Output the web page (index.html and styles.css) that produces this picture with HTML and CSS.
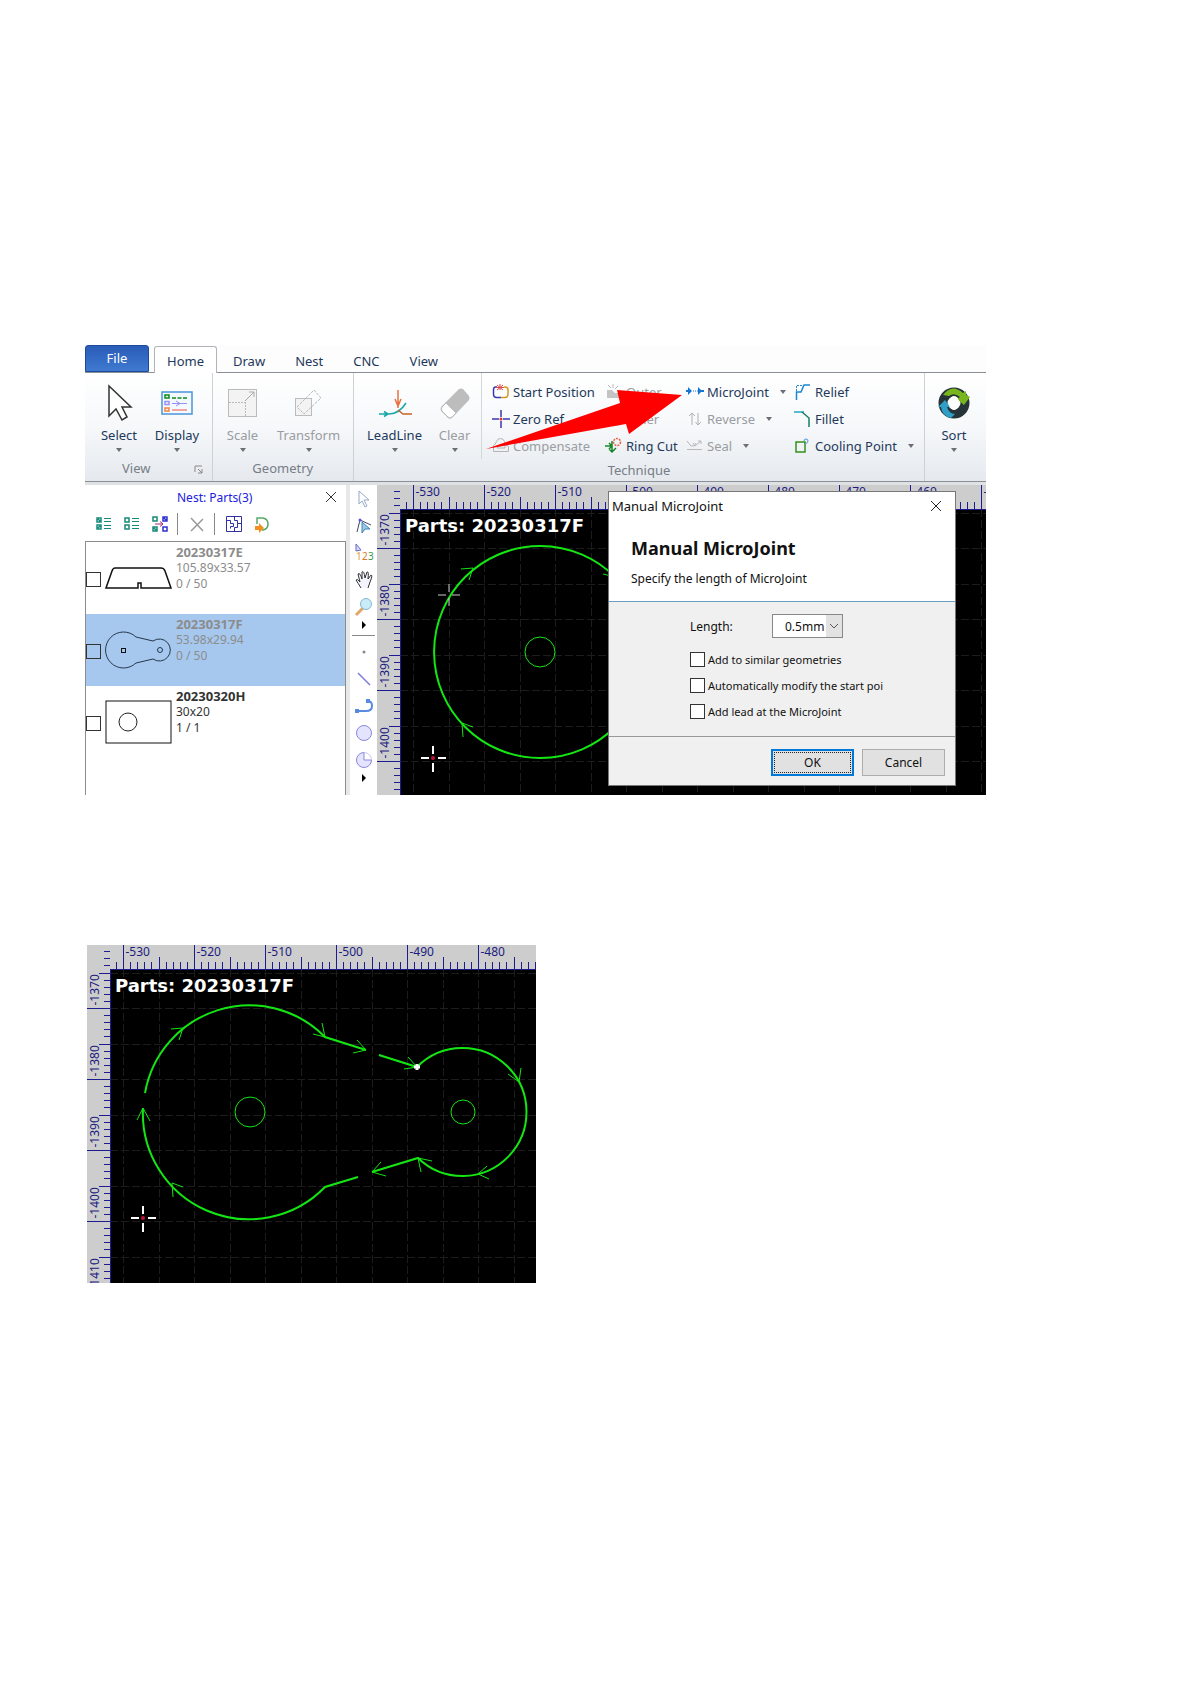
FILE: index.html
```html
<!DOCTYPE html>
<html lang="en">
<head>
    <meta charset="UTF-8">
    <meta name="viewport" content="width=device-width, initial-scale=1.0">
    <title>Manual MicroJoint</title>
    <link rel="stylesheet" href="styles.css">
</head>
<body>
    <div class="app">
        <nav class="tabs">
            <button class="tab file">File</button>
            <button class="tab active">Home</button>
            <button class="tab">Draw</button>
            <button class="tab">Nest</button>
            <button class="tab">CNC</button>
            <button class="tab">View</button>
        </nav>
        <div class="ribbon">
            <section class="group view">
                <div class="tools">
                    <button class="big">
                        <svg width="36" height="38"><path d="M8 2v30l7-7 6 11 5-3-5-10h9z" fill="#fff" stroke="#333" stroke-width="1.5"/></svg>
                        <span>Select</span><i class="caret"></i>
                    </button>
                    <button class="big">
                        <svg width="36" height="38"><rect x="3" y="8" width="30" height="22" fill="#f4f9ff" stroke="#4a94d8" stroke-width="1.5"/><path d="M6 11h4v3H6z" fill="none" stroke="#0a8a1a" stroke-width="1.5"/><path d="M6 17.500h4v3H6z" fill="none" stroke="#9a90f0" stroke-width="1.500"/><path d="M6 24h4v3H6z" fill="none" stroke="#f58040" stroke-width="1.500"/><path d="M13 14h15" stroke="#0a8a1a" stroke-width="1.500" stroke-dasharray="4 1.500"/><path d="M13 19.500h15M17 17l4 2.500-4 2.500" fill="none" stroke="#9a90f0"/><path d="M13 26h15" stroke="#f05040"/></svg>
                        <span>Display</span><i class="caret"></i>
                    </button>
                </div>
                <h3>View</h3>
                <svg class="launcher" width="9" height="9"><path d="M1 7V1h7M4 4l4 4M8 4v4H4" fill="none" stroke="#888"/></svg>
            </section>
            <section class="group geometry">
                <div class="tools">
                    <button class="big off">
                        <svg width="36" height="38"><rect x="3.500" y="5.500" width="28" height="27" fill="#f3f3f3" stroke="#bbb"/><path d="M4 18.500h16M20.500 18v14" fill="none" stroke="#bbb" stroke-dasharray="2 1"/><path d="M20 17l9-9M24 8h5v5" fill="none" stroke="#aaa"/></svg>
                        <span>Scale</span><i class="caret"></i>
                    </button>
                    <button class="big off">
                        <svg width="36" height="38"><rect x="4.500" y="14.500" width="16" height="17" fill="#f3f3f3" stroke="#bbb"/><path d="M6 23L23 6l7 8-17 16z" fill="none" stroke="#bbb" stroke-dasharray="3 1"/></svg>
                        <span>Transform</span><i class="caret"></i>
                    </button>
                </div>
                <h3>Geometry</h3>
            </section>
            <section class="group technique">
                <div class="tools">
                    <button class="big">
                        <svg width="36" height="38"><path d="M21 6v18M18 15l3 7 3-7" fill="none" stroke="#e87040" stroke-width="1.500"/><path d="M2 30h10c7 0 12-3 17-11M7 27.500l4 2.500-4 2.500" fill="none" stroke="#18a8a8" stroke-width="1.500"/><path d="M21 26l5 4h9" fill="none" stroke="#c86428" stroke-width="1.500"/></svg>
                        <span>LeadLine</span><i class="caret"></i>
                    </button>
                    <button class="big off">
                        <svg width="36" height="38"><path d="M4 23L22 5q2-1 4 0l6 7q1 2 0 4L15 34q-2 1-4 0l-7-7q-1-2 0-4z" fill="#bdbdbd"/><path d="M5 23l4-4 10 10-4 4q-2 2-4 0l-6-6q-1-2 0-4z" fill="#fff" stroke="#bbb"/></svg>
                        <span>Clear</span><i class="caret"></i>
                    </button>
                    <div class="cols">
                        <button class="small">
                            <svg width="18" height="18"><path d="M5 4H3.500Q1.500 4 1.500 7v4q0 3.500 3 3.500H9" fill="none" stroke="#3838b8" stroke-width="1.500"/><path d="M9 14.500h4q3 0 3-3.500V7q0-3-3-3h-1" fill="none" stroke="#d89820" stroke-width="1.500"/><path d="M5 2l6 5M11 2L5 7M8 1v6M4 4.500h8" stroke="#e04848"/></svg>
                            Start Position
                        </button>
                        <button class="small off">
                            <svg width="18" height="18"><path d="M2 7h5l3 3h5v5H2z" fill="#c4c4c4"/><path d="M3 2l3 3M8 1v4M13 3l-3 3" stroke="#bbb"/></svg>
                            Outer
                        </button>
                        <button class="small">
                            <svg width="18" height="18"><path d="M0 8h4M14 8h4" stroke="#1477d4" stroke-width="2"/><path d="M2 4l4 4-4 4zM12 4l4 4-4 4z" fill="#1477d4"/><path d="M7 8h5" stroke="#1477d4" stroke-dasharray="1 1"/></svg>
                            MicroJoint <i class="caret"></i>
                        </button>
                        <button class="small">
                            <svg width="18" height="18"><path d="M2.500 17V9H7l3-7h6" fill="none" stroke="#1c86d0" stroke-width="1.500"/><path d="M2.500 8V2.500H9" fill="none" stroke="#1c86d0" stroke-dasharray="2 1"/></svg>
                            Relief
                        </button>
                        <button class="small">
                            <svg width="18" height="18"><path d="M0 9h7M11 9h7M9 0v7M9 11v7" stroke="#3838b0" stroke-width="1.500"/><circle cx="9" cy="9" r="1.500" fill="#d83030"/></svg>
                            Zero Ref
                        </button>
                        <button class="small off">
                            <svg width="18" height="18"><path d="M2 5h12v10H2z" fill="none" stroke="#bbb"/></svg>
                            Inner
                        </button>
                        <button class="small off">
                            <svg width="18" height="18"><path d="M6 15V3M3 6l3-3 3 3M12 3v12M9.500 12l2.500 3 3-3" fill="none" stroke="#b0b0b0"/></svg>
                            Reverse <i class="caret"></i>
                        </button>
                        <button class="small">
                            <svg width="18" height="18"><path d="M0 2h10" stroke="#1ca8c0" stroke-width="1.500"/><path d="M8 2l7 6v9" fill="none" stroke="#168060" stroke-width="1.500"/></svg>
                            Fillet
                        </button>
                        <button class="small off">
                            <svg width="18" height="18"><path d="M1.500 8.500q2-1 3-4t4-3 4 3q0 4 4 5v5h-15z" fill="none" stroke="#b4b4b4"/><path d="M5 11h8V8H7z" fill="none" stroke="#b4b4b4"/></svg>
                            Compensate
                        </button>
                        <button class="small">
                            <svg width="18" height="18"><path d="M0 9h7M4 6l3 3-3 3M7 4v10M4 12l3 3 4-4" fill="none" stroke="#16862a" stroke-width="1.500"/><circle cx="12" cy="5" r="3.500" fill="none" stroke="#e06040" stroke-width="1.500" stroke-dasharray="2 1"/></svg>
                            Ring Cut
                        </button>
                        <button class="small off">
                            <svg width="18" height="18"><path d="M1 4l4 5h3l2-3M7 6l2 3 6-5M1 12.500h15M12 4h3v3" fill="none" stroke="#b8b8b8"/></svg>
                            Seal <i class="caret"></i>
                        </button>
                        <button class="small">
                            <svg width="18" height="18"><path d="M2 5h9v10H2z" fill="none" stroke="#36901c" stroke-width="1.500"/><path d="M10 4q0-2 2-2t2 2-3 3" fill="none" stroke="#4a94e0"/></svg>
                            Cooling Point <i class="caret"></i>
                        </button>
                    </div>
                </div>
                <h3>Technique</h3>
            </section>
            <section class="group sort">
                <div class="tools">
                    <button class="big">
                        <svg width="36" height="38"><circle cx="18" cy="19" r="11" fill="none" stroke="#26343a" stroke-width="9"/><path d="M7 11Q16-1 27 9l3-2v4l4 2-6 8-7-6 3-2q-6-5-11-1z" fill="#79b51c"/><path d="M2 23l7-7 5 7h-3q2 7 8 7l-4 4Q6 32 5 23z" fill="#2f9fc8"/><ellipse cx="18" cy="19" rx="5" ry="7" fill="#fff"/></svg>
                        <span>Sort</span><i class="caret"></i>
                    </button>
                </div>
            </section>
            <svg class="pointer" width="200" height="62"><path d="M3 60L137 14 134 1 199 6 146 45 143 35z" fill="#f00"/></svg>
        </div>
        <div class="workspace">
            <aside class="parts">
                <header>
                    <h2>Nest: Parts(3)</h2>
                    <button class="close" aria-label="Close"><svg width="12" height="12"><path d="M1 1l10 10M11 1L1 11" stroke="#333"/></svg></button>
                </header>
                <div class="part-tools">
                    <button aria-label="Select all"><svg width="18" height="18"><path d="M2 3h4v4H2zM2 10h4v4H2zM3 4l2 2M5 11l-2 2" fill="none" stroke="#168a7a" stroke-width="1.500"/><path d="M9 3.500h7M9 6.500h7M9 10.500h7M9 13.500h7" stroke="#168a7a"/></svg></button>
                    <button aria-label="Select none"><svg width="18" height="18"><path d="M2 3h4v4H2zM2 10h4v4H2z" fill="none" stroke="#168a7a" stroke-width="1.500"/><path d="M9 3.500h7M9 6.500h7M9 10.500h7M9 13.500h7" stroke="#168a7a"/></svg></button>
                    <button aria-label="Invert"><svg width="18" height="18"><path d="M2 2h4v4H2zM2 12h4v4H2zM3 13l2 2" fill="none" stroke="#168a7a" stroke-width="1.500"/><path d="M12 2h4v4h-4zM12 12h4v4h-4zM13 3l2 2" fill="none" stroke="#3030d0" stroke-width="1.500"/><path d="M4 9h8M9 6.500L12 9l-3 2.500" fill="none" stroke="#a02878"/></svg></button>
                    <hr>
                    <button class="gap" aria-label="Delete"><svg width="18" height="18"><path d="M3 3l12 13M15 4L3 16" stroke="#999" stroke-width="1.500"/></svg></button>
                    <hr>
                    <button class="gap" aria-label="Nest"><svg width="18" height="18"><path d="M1.500 1.500h15v15h-15zM1 5.500h4.500v3h3v3h-3v2M9.500 1v4.500h3v3h4M12.500 8.500v4h-3v4" fill="none" stroke="#3030a0"/></svg></button>
                    <button aria-label="Import"><svg width="18" height="18"><path d="M4 9V3h6q5 1 5 6t-5 6H9" fill="none" stroke="#58a868" stroke-width="1.500"/><path d="M2 11h4V8l5 5-5 5v-3H2z" fill="#f09020"/></svg></button>
                </div>
                <ul class="list">
                    <li>
                        <input type="checkbox" id="p1">
                        <svg width="68" height="44"><path d="M7 11q1-3 3-3h46q3 0 4 3l6 17H36v-5h-3v5H1z" fill="none" stroke="#111" stroke-width="1.500"/></svg>
                        <label for="p1"><b>20230317E</b><span>105.89x33.57</span><span>0 / 50</span></label>
                    </li>
                    <li class="selected">
                        <input type="checkbox" id="p2">
                        <svg width="68" height="44"><path d="M31 9A18 18 0 1 0 31 35L48 31A11 11 0 1 0 48 13z" fill="none" stroke="#26384c"/><rect x="16.500" y="20.500" width="4" height="4" fill="none" stroke="#111"/><circle cx="55" cy="22" r="2.500" fill="none" stroke="#26384c"/></svg>
                        <label for="p2"><b>20230317F</b><span>53.98x29.94</span><span>0 / 50</span></label>
                    </li>
                    <li class="ready">
                        <input type="checkbox" id="p3">
                        <svg width="68" height="44"><rect x="1" y="1" width="65" height="42" fill="none" stroke="#111"/><circle cx="23" cy="22" r="9" fill="none" stroke="#222"/></svg>
                        <label for="p3"><b>20230320H</b><span>30x20</span><span>1 / 1</span></label>
                    </li>
                </ul>
            </aside>
            <div class="toolbar">
                <button aria-label="Select"><svg width="20" height="20"><path d="M5 2v13l3-3 3 6 2-1-3-6h5z" fill="#fff" stroke="#98a8c8"/></svg></button>
                <button aria-label="Node edit"><svg width="20" height="20"><path d="M3 16L6 4l11 5" fill="none" stroke="#446"/><path d="M8 6v11l3-4h5z" fill="#9cc8e8" stroke="#3a84b8"/><circle cx="6" cy="4" r="1.500" fill="#55d"/></svg></button>
                <button aria-label="Order"><svg width="20" height="20"><path d="M2 1v7l5-1z" fill="#d8d8ff" stroke="#6868c8"/><text x="2" y="17" class="num" fill="#e0a030">1</text><text x="8" y="17" class="num" fill="#d87828">2</text><text x="14" y="17" class="num" fill="#3a9a48">3</text></svg></button>
                <button aria-label="Pan"><svg width="20" height="20"><path d="M7 18q-3-5-5-8 1-2 4 2L4 4q2-2 4 5L8 2q2-2 3 6l2-6q2-1 1 7l3-4q2 0-1 7l-2 6" fill="#f4f4ff" stroke="#333"/></svg></button>
                <button aria-label="Zoom"><svg width="20" height="20"><path d="M2 18l7-7" stroke="#e0a868" stroke-width="3"/><circle cx="12" cy="7" r="5.500" fill="#c8ecf8" stroke="#88b8cc"/></svg></button>
                <i class="more"></i>
                <hr>
                <button aria-label="Point"><svg width="20" height="20"><circle cx="10" cy="10" r="1.500" fill="#888"/></svg></button>
                <button aria-label="Line"><svg width="20" height="20"><path d="M4 4l12 12" stroke="#7c7cd8" stroke-width="1.500"/></svg></button>
                <button aria-label="Arc"><svg width="20" height="20"><path d="M3 15h9q6 0 6-5t-4-5" fill="none" stroke="#5a8ae0" stroke-width="2"/><path d="M1 13h4v4H1zM12 3h4v4h-4z" fill="#5a8ae0"/></svg></button>
                <button aria-label="Circle"><svg width="20" height="20"><circle cx="10" cy="10" r="7.500" fill="#e4e4ff" stroke="#8888dc"/></svg></button>
                <button aria-label="Pie"><svg width="20" height="20"><path d="M10 10h7.500A7.500 7.500 0 1 1 10 2.500z" fill="#e4e4ff" stroke="#8888dc"/><path d="M10 2.500A7.500 7.500 0 0 1 17.500 10" fill="none" stroke="#c8c8f0"/></svg></button>
                <i class="more"></i>
            </div>
            <div class="stage">
                <svg class="canvas">
                    <g class="grid"></g>
                    <text class="caption" x="28" y="47">Parts: 20230317F</text>
                    <g class="cut">
                        <path d="M238 92A106 106 0 1 0 238 242"/>
                        <circle class="thin" cx="163" cy="167" r="15"/>
                        <path class="thin" d="M84 84l12-1-4 12M226 89l12 3-3-14M96 242l-11-4 1 14"/>
                    </g>
                    <path class="start" d="M61 110h8M75 110h8M72 99v8M72 113v8"/>
                    <path class="cursor" d="M44 273h8M61 273h8M56 261v8M56 278v9"/>
                    <circle cx="56" cy="273" r="2" fill="#c0103c"/>
                </svg>
                <form class="dialog">
                    <header>
                        <span>Manual MicroJoint</span>
                        <button type="button" class="close" aria-label="Close"><svg width="12" height="12"><path d="M1 1l10 10M11 1L1 11" stroke="#222"/></svg></button>
                    </header>
                    <div class="intro">
                        <h1>Manual MicroJoint</h1>
                        <p>Specify the length of MicroJoint</p>
                    </div>
                    <div class="fields">
                        <div class="field">
                            <label for="length">Length:</label>
                            <div class="combo">
                                <select id="length"><option>0.5mm</option></select>
                                <svg width="16" height="22"><path d="M4 9l4 4 4-4" fill="none" stroke="#555"/></svg>
                            </div>
                        </div>
                        <div class="check"><input type="checkbox" id="similar"><label for="similar">Add to similar geometries</label></div>
                        <div class="check"><input type="checkbox" id="modify"><label for="modify">Automatically modify the start poi</label></div>
                        <div class="check"><input type="checkbox" id="lead"><label for="lead">Add lead at the MicroJoint</label></div>
                    </div>
                    <footer>
                        <button type="button" class="ok"><span>OK</span></button>
                        <button type="button">Cancel</button>
                    </footer>
                </form>
            </div>
        </div>
    </div>

    <div class="result">
        <svg class="canvas">
            <g class="grid"></g>
            <text class="caption" x="28" y="47">Parts: 20230317F</text>
            <g class="cut">
                <path d="M58 148A106 106 0 0 1 238 92L279 105M292 110L330 122A64 64 0 1 1 331 213L285 227M271 232L238 242A106 106 0 0 1 56 163"/>
                <circle class="thin" cx="163" cy="167" r="15"/>
                <circle class="thin" cx="376" cy="167" r="12"/>
                <path class="thin" d="M84 84l12-1-4 12M226 89l12 3-3-14M266 108l13-3-9-10M317 124l13-2-9-10M421 129l11 8 2-14M400 221l-9 8 11 5M345 216l-14-3 3 14M294 217l-9 10 14 4M96 242l-11-4 1 14M50 175l6-12 7 13"/>
            </g>
            <path d="M327 122h6M330 119v6" stroke="#fff" stroke-width="3"/>
            <path class="cursor" d="M44 273h8M61 273h8M56 261v8M56 278v9"/>
            <circle cx="56" cy="273" r="2" fill="#c0103c"/>
        </svg>
    </div>
    <script src="ruler.js"></script>
</body>
</html>
```

FILE: styles.css
```css
* {
    box-sizing: border-box;
}
body {
    margin: 0;
    padding: 345px 204px 100px 85px;
    background: #fff;
    font-family: "Noto Sans", "Open Sans", sans-serif;
    font-size: 13px;
    color: #1e395b;
}
button, select {
    font: inherit;
    color: inherit;
}
button {
    background: none;
    border: none;
    padding: 0;
    white-space: nowrap;
}
h1, h2, h3, p, ul {
    margin: 0;
    padding: 0;
    font-weight: normal;
    list-style: none;
}
svg {
    display: block;
    flex: none;
}
.tabs {
    display: flex;
    height: 28px;
    padding-top: 1px;
    background: #fdfdfd;
    border-bottom: 1px solid #8b9097;
}
.tab {
    padding: 3px 15px 0;
}
.tab.file {
    width: 64px;
    margin: -1px 5px 0 0;
    padding: 0 0 1px;
    color: #fff;
    background: linear-gradient(#2a5cb8, #3f7ad0);
    border: 1px solid #1c4a9c;
    border-radius: 3px 3px 0 0;
}
.tab.active {
    height: 27px;
    margin-right: 1px;
    padding: 2px 12px 0;
    background: #fff;
    border: 1px solid #b0b4ba;
    border-bottom: none;
    border-radius: 3px 3px 0 0;
}
.ribbon {
    position: relative;
    display: flex;
    height: 109px;
    background: linear-gradient(#fff, #f6f8fa 50%, #e5e9ee);
    border-bottom: 1px solid #8b9097;
}
.group {
    position: relative;
    display: flex;
    flex-direction: column;
    border-right: 1px solid #cdd1d6;
}
.group h3 {
    margin-top: auto;
    height: 24px;
    padding-bottom: 2px;
    font-size: 13px;
    line-height: 22px;
    text-align: center;
    color: #777d86;
}
.view {
    width: 128px;
}
.geometry {
    width: 142px;
}
.technique {
    width: 571px;
}
.view .tools {
    padding-left: 5px;
}
.geometry .tools {
    padding-left: 1px;
}
.technique .tools {
    padding-left: 12px;
}
.technique .big + .big {
    margin-left: 3px;
}
.sort {
    flex: 1;
    border: none;
}
.sort .tools {
    justify-content: center;
    padding-right: 3px;
}
.view h3 {
    padding-right: 24px;
}
.launcher {
    position: absolute;
    right: 9px;
    bottom: 7px;
}
.tools {
    display: flex;
}
.big {
    display: flex;
    flex-direction: column;
    align-items: center;
    width: 58px;
    padding-top: 11px;
    line-height: 20px;
}
.geometry .big + .big {
    width: 74px;
}
.big span {
    margin-top: 3px;
}
.off {
    color: #9a9da2;
}
.caret {
    border: 3px solid transparent;
    border-top: 4px solid #6b6f75;
    border-bottom: none;
    margin-top: 3px;
}
.cols {
    display: grid;
    grid-template-columns: 113px 81px 108px 130px;
    grid-auto-rows: 27px;
    margin-left: -2px;
    padding: 5px 0 0 10px;
    border-left: 1px solid #d4d7dc;
}
.small {
    display: flex;
    align-items: center;
    gap: 3px;
}
.small .caret {
    margin: 0 0 0 8px;
}
.pointer {
    position: absolute;
    left: 398px;
    top: 16px;
}
.workspace {
    display: flex;
    border-top: 3px solid #dfe2e5;
}
.parts {
    width: 261px;
    display: flex;
    flex-direction: column;
}
.parts header {
    display: flex;
    align-items: center;
    height: 24px;
    padding: 0 9px 0 92px;
}
.parts h2 {
    flex: 1;
    font-size: 12px;
    color: #2020e0;
}
.part-tools {
    display: flex;
    align-items: center;
    gap: 10px;
    height: 32px;
    padding: 0 10px 3px;
}
.part-tools hr {
    width: 1px;
    height: 22px;
    margin: 0 -2px;
    border: none;
    background: #888;
}
.part-tools .gap {
    margin-left: 2px;
}
.list {
    flex: 1;
    border: 1px solid #8c8c8c;
    border-bottom: none;
}
.list li {
    display: flex;
    height: 72px;
    color: #8c8c8c;
    font-size: 12px;
}
.list li.selected {
    background: #a6c8ef;
}
.list li.ready {
    color: #333;
}
.list svg {
    margin: 14px 0 0 4px;
}
.list li:first-child svg {
    margin-top: 18px;
}
input[type="checkbox"] {
    appearance: none;
    flex: none;
    width: 15px;
    height: 15px;
    margin: 0;
    background: #fff;
    border: 1px solid #333;
}
.list input[type="checkbox"] {
    margin-top: 30px;
    background: none;
}
.list label {
    display: flex;
    flex-direction: column;
    padding: 2px 0 0 3px;
    line-height: 16px;
}
.list b {
    font-size: 13px;
}
.toolbar {
    display: flex;
    flex-direction: column;
    align-items: center;
    width: 31px;
    border-left: 4px solid #e6e8ea;
}
.toolbar button {
    height: 27px;
}
.toolbar hr {
    width: 23px;
    height: 1px;
    margin: 3px 0 2px;
    border: none;
    background: #888;
}
.more {
    height: 12px;
    padding-top: 1px;
}
.more::before {
    content: "";
    display: block;
    border: 4px solid transparent;
    border-left: 4px solid #000;
    border-right: none;
}
.num {
    font-size: 10px;
}
.stage {
    position: relative;
    flex: 1;
}
.canvas {
    width: 100%;
    height: 310px;
    background: #000;
    color: #000;
}
.result {
    max-width: 449px;
    margin: 150px 0 0 2px;
}
.result .canvas {
    height: 338px;
}
.ruler {
    fill: #cdcdcd;
}
.ticks {
    stroke: #1c1c90;
    shape-rendering: crispEdges;
}
.lines {
    stroke: #1c1c1c;
    stroke-dasharray: 8 3;
    shape-rendering: crispEdges;
}
.mark {
    font-size: 12px;
    fill: #1c1c80;
}
.caption {
    font-family: "DejaVu Sans", sans-serif;
    font-size: 18px;
    font-weight: bold;
    fill: #fff;
}
.cut {
    fill: none;
    stroke: #14e614;
    stroke-width: 2;
}
.cut .thin {
    stroke-width: 1;
}
.start {
    stroke: #ccc;
}
.cursor {
    stroke: #fff;
    stroke-width: 2;
}
.dialog {
    position: absolute;
    left: 231px;
    top: 6px;
    width: 348px;
    background: #f0f0f0;
    border: 1px solid #777;
    color: #111;
    font-size: 12px;
}
.dialog header {
    display: flex;
    justify-content: space-between;
    align-items: center;
    height: 28px;
    padding: 0 13px 0 3px;
    background: #fff;
    font-size: 13px;
}
.intro {
    height: 82px;
    padding: 15px 22px 0;
    background: #fff;
    border-bottom: 1px solid #6a9fc0;
}
.intro h1 {
    font-size: 18px;
    line-height: 26px;
    font-weight: bold;
}
.intro p {
    margin-top: 9px;
    line-height: 18px;
}
.fields {
    height: 135px;
    padding: 12px 0 0 81px;
    border-bottom: 1px solid #999;
}
.field {
    display: flex;
    align-items: center;
    height: 24px;
    margin-bottom: 8px;
}
.field label {
    width: 82px;
}
.combo {
    display: flex;
    width: 71px;
    height: 24px;
    background: #e2e2e2;
    border: 1px solid #888;
}
.combo select {
    appearance: none;
    flex: 1;
    min-width: 0;
    padding: 0 0 0 12px;
    background: #fff;
    border: none;
    border-radius: 0;
}
.check {
    display: flex;
    align-items: center;
    gap: 3px;
    height: 26px;
    font-size: 11px;
}
footer {
    display: flex;
    justify-content: flex-end;
    gap: 8px;
    padding: 12px 10px 9px;
}
footer button {
    width: 83px;
    height: 27px;
    background: #e1e1e1;
    border: 1px solid #adadad;
}
footer .ok {
    padding: 1px;
    border: 2px solid #0078d7;
}
.ok span {
    display: block;
    line-height: 19px;
    border: 1px dotted #222;
}
```

FILE: ruler.js
```javascript
const NS = "http://www.w3.org/2000/svg";
const STEP = 7.1; // pixels for 1 mm
const X0 = 36, Y0 = 63; // -530 and -1370

function add(parent, tag, attrs, text) {
    const el = document.createElementNS(NS, tag);
    for (const key in attrs) el.setAttribute(key, attrs[key]);
    if (text) el.textContent = text;
    parent.appendChild(el);
}

document.querySelectorAll(".canvas").forEach(svg => {
    const grid = svg.querySelector(".grid");
    const w = svg.clientWidth, h = svg.clientHeight;
    let lines = "", ticks = "M23 24H" + w + "M23 24V" + h;
    const labels = [];
    for (let i = -4; X0 + i * STEP < w; i++) {
        const x = Math.round(X0 + i * STEP) + 0.5;
        const top = i % 10 === 0 ? 0 : i % 5 === 0 ? 12 : 17;
        if (x > 23) ticks += "M" + x + " " + top + "V24";
        if (i % 5 === 0) lines += "M" + x + " 24V" + h;
        if (i % 10 === 0) labels.push({ x: x + 2, y: 11, t: i - 530 });
    }
    for (let i = -8; Y0 + i * STEP < h + 40; i++) {
        const y = Math.round(Y0 + i * STEP) + 0.5;
        const left = i % 10 === 0 ? 0 : i % 5 === 0 ? 12 : 17;
        ticks += "M" + left + " " + y + "H23";
        if (i % 5 === 0) lines += "M23 " + y + "H" + w;
        if (i % 10 === 0) labels.push({ x: 12, y: y - 3, t: -1370 - i, r: 1 });
    }
    add(grid, "path", { class: "lines", d: lines });
    add(grid, "path", { class: "ruler", d: "M0 0H" + w + "V24H23V" + h + "H0z" });
    add(grid, "path", { class: "ticks", d: ticks, fill: "none" });
    labels.forEach(l => {
        const attrs = { class: "mark", x: l.x, y: l.y };
        if (l.r) attrs.transform = "rotate(-90 " + l.x + " " + l.y + ")";
        add(grid, "text", attrs, String(l.t));
    });
});
```
